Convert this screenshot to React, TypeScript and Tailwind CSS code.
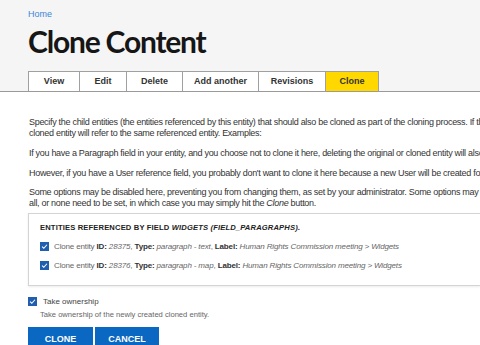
const body = { fontFamily: "'Liberation Sans', Arial, sans-serif" };

export default function App() {
  const tabs = ["View", "Edit", "Delete", "Add another", "Revisions", "Clone"];
  const widths = ["w-[52px]", "w-[48px]", "w-[57px]", "w-[77px]", "w-[68px]", "w-[54px]"];
  return (
    <div className="h-[345px] w-[480px] overflow-hidden bg-white text-[#333]" style={body}>
      <div className="border-b border-[#9a9a9a] bg-[#f5f5f5] pl-[28px]">
        <div className="pt-[9px] text-[9px] leading-[10px] text-[#3c86d8]">Home</div>
        <h1
          className="mt-[5px] text-[30px] font-bold leading-[34px] tracking-[-1.2px] text-[#161616]"
          style={{ fontFamily: "Lato, 'Liberation Sans', sans-serif" }}
        >
          Clone Content
        </h1>
        <div className="mt-[13px] flex">
          {tabs.map((t, i) => (
            <div
              key={t}
              className={`${widths[i]} -ml-px flex h-[20px] items-center justify-center border border-b-0 border-[#a0a0a0] text-[9px] font-bold first:ml-0 ${
                t === "Clone" ? "bg-[#ffd800] text-[#333]" : "bg-white text-[#333]"
              }`}
            >
              {t}
            </div>
          ))}
        </div>
      </div>
      <div className="pl-[29px] pt-[25px] text-[9px] leading-[11px] tracking-[-0.3px]">
        <p className="whitespace-nowrap">
          Specify the child entities (the entities referenced by this entity) that should also be cloned as part of the cloning process. If th
          <br />
          cloned entity will refer to the same referenced entity. Examples:
        </p>
        <p className="mt-[9px] whitespace-nowrap">
          If you have a Paragraph field in your entity, and you choose not to clone it here, deleting the original or cloned entity will also
        </p>
        <p className="mt-[9px] whitespace-nowrap">
          However, if you have a User reference field, you probably don't want to clone it here because a new User will be created for re
        </p>
        <p className="mt-[8px] whitespace-nowrap">
          Some options may be disabled here, preventing you from changing them, as set by your administrator. Some options may also
          <br />
          all, or none need to be set, in which case you may simply hit the <em>Clone</em> button.
        </p>
        <div className="-ml-px mt-[4px] border border-r-0 border-[#d4d4d4] pb-[14px] pl-[11px] pt-[8px] tracking-normal shadow-[0_1px_2px_rgba(0,0,0,0.08)]">
          <div className="whitespace-nowrap text-[7.6px] font-bold leading-[11px] tracking-[0.02em] text-[#222]">
            ENTITIES REFERENCED BY FIELD <em>WIDGETS (FIELD_PARAGRAPHS)</em>.
          </div>
          {["28375", "28376"].map((id, i) => (
            <div key={id} className="mt-[8px] flex h-[11px] items-center gap-[5px] whitespace-nowrap text-[8px] tracking-[-0.15px] text-[#666]">
              <Check />
              <span>
                Clone entity <b className="text-[#333]">ID:</b> <em>{id}</em>, <b className="text-[#333]">Type:</b>{" "}
                <em>paragraph - {i === 0 ? "text" : "map"}</em>, <b className="text-[#333]">Label:</b>{" "}
                <em>Human Rights Commission meeting &gt; Widgets</em>
              </span>
            </div>
          ))}
        </div>
        <div className="-ml-px mt-[10px] flex h-[11px] items-center gap-[6px] text-[8px] tracking-normal text-[#444]">
          <Check />
          <span>Take ownership</span>
        </div>
        <div className="mt-[2px] pl-[11px] text-[7.6px] leading-[11px] tracking-normal text-[#666]">
          Take ownership of the newly created cloned entity.
        </div>
        <div className="-ml-px mt-[7px] flex gap-[2px] tracking-normal">
          <button className="h-[24px] w-[65px] bg-[#0b68c2] text-[9px] font-bold text-white">CLONE</button>
          <button className="h-[24px] w-[64px] bg-[#0b68c2] text-[9px] font-bold text-white">CANCEL</button>
        </div>
      </div>
    </div>
  );
}

function Check() {
  return (
    <span className="flex h-[9px] w-[9px] shrink-0 items-center justify-center bg-[#1f5fae]">
      <svg viewBox="0 0 10 10" className="h-[7px] w-[7px]">
        <path d="M1.5 5.2 L4 7.5 L8.5 2.5" fill="none" stroke="white" strokeWidth="1.5" />
      </svg>
    </span>
  );
}
